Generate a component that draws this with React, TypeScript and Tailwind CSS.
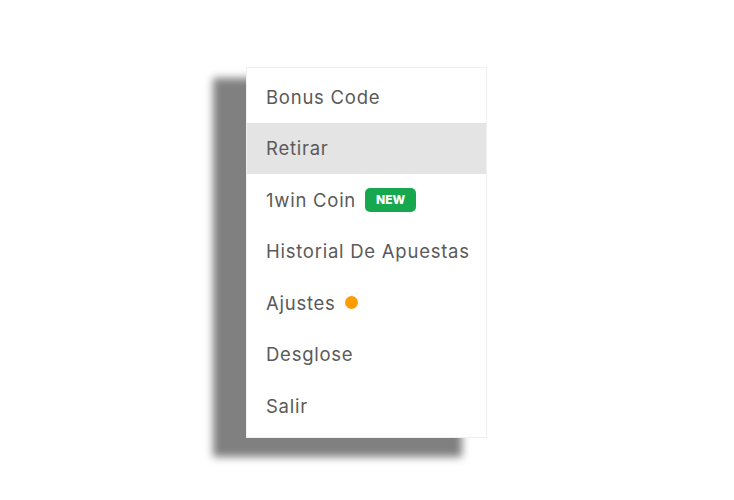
const items = [
  { label: "Bonus Code" },
  { label: "Retirar", active: true },
  { label: "1win Coin", badge: true },
  { label: "Historial De Apuestas" },
  { label: "Ajustes", dot: true },
  { label: "Desglose" },
  { label: "Salir" },
];

const App = () => {
  return (
    <div className="w-[734px] h-[500px] bg-white pt-[67px] pl-[246px] font-['Inter',sans-serif]">
      <ul className="w-[241px] bg-white border border-[#f0f0f0] pt-[3px] pb-[5px] shadow-[-29px_15px_8px_4px_#808080]">
        {items.map((item) => (
          <li
            key={item.label}
            className={`h-[51.5px] flex items-center gap-[9px] pl-[19px] pt-[2px] text-[18.5px] tracking-[0.75px] text-[#5a5a5a] ${
              item.active ? "bg-[#e4e4e4]" : ""
            }`}
          >
            <span>{item.label}</span>
            {item.badge && (
              <span className="h-[24px] w-[51px] -mt-[2px] justify-center flex items-center rounded-[5px] bg-[#17a84f] text-white text-[12px] tracking-normal font-extrabold">
                NEW
              </span>
            )}
            {item.dot && <span className="w-[13px] h-[13px] -mt-[2px] rounded-full bg-[#ff9c00]" />}
          </li>
        ))}
      </ul>
    </div>
  );
};

export default App;
